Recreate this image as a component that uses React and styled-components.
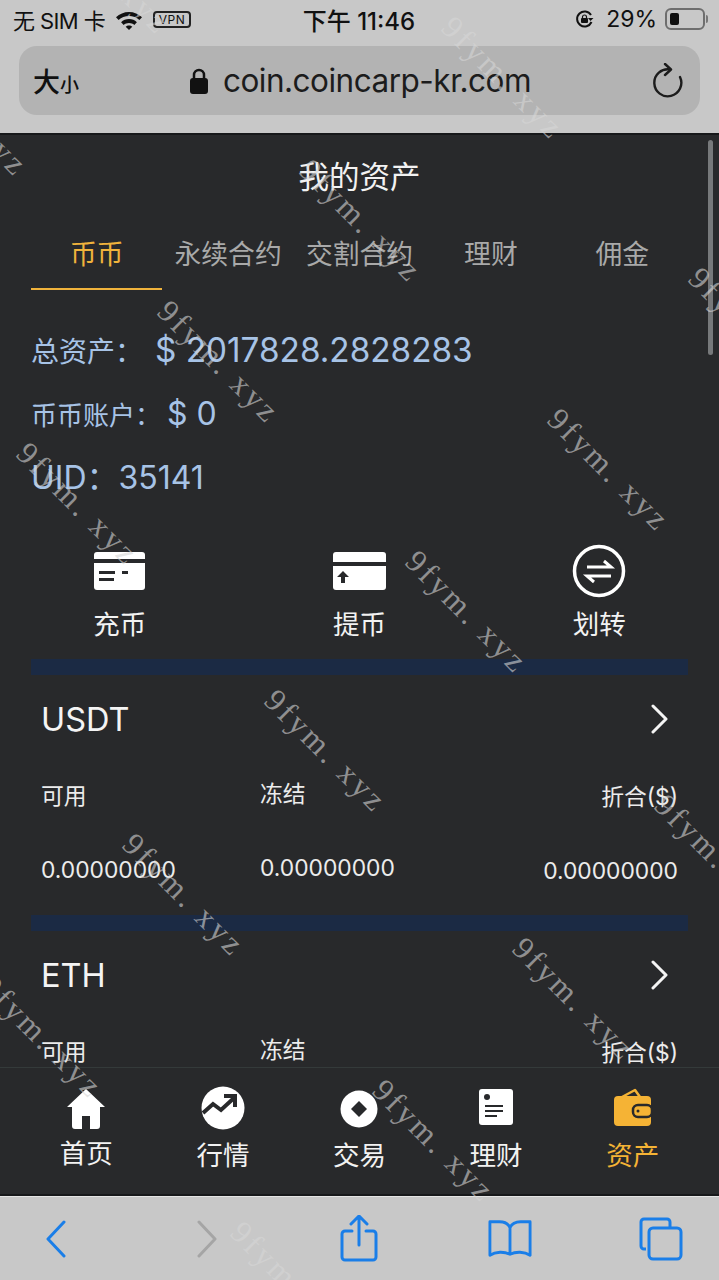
import React from "react";
import styled, { createGlobalStyle } from "styled-components";

const SANS = `Inter, "Noto Sans CJK SC", sans-serif`;
const DARK = "#28292b";

const Global = createGlobalStyle`
    html, body { margin:0; padding:0; background:${DARK}; }
    * { box-sizing:border-box; }
    body { font-family:${SANS}; }
`;

const Phone = styled.div`
    position:relative;
    width:719px;
    height:1280px;
    display:flex;
    flex-direction:column;
    overflow:hidden;
    background:${DARK};
`;

/* 상단 */
const TopChrome = styled.div`
    height:135px;
    flex:none;
    background:#c8c8c8;
    border-bottom:2px solid #17181a;
    color:#111;
`;

const StatusBar = styled.div`
    height:46px;
    padding:0 14px 8px 13px;
    display:grid;
    grid-template-columns:1fr auto 1fr;
    align-items:center;
`;

const StatusSide = styled.div`
    display:flex;
    align-items:center;
    gap:${p => p.$gap || 10}px;
    justify-content:${p => p.$end ? "flex-end" : "flex-start"};
`;

const StatusText = styled.span`
    font-size:${p => p.$size || 22}px;
    font-weight:${p => p.$weight || 400};
    letter-spacing:${p => p.$track || 0}px;
    margin-left:${p => p.$left || 0}px;
    white-space:nowrap;
`;

const VpnBadge = styled.span`
    width:38px;
    height:17px;
    border:2px solid #222;
    border-radius:4px;
    font-size:12px;
    line-height:13px;
    text-align:center;
    letter-spacing:.5px;
`;

const Battery = styled.div`
    position:relative;
    width:40px;
    height:22px;
    padding:3px;
    border:2px solid #6e6e6e;
    border-radius:6px;
    &::before {
        content:"";
        display:block;
        width:9px;
        height:100%;
        background:#111;
        border-radius:2px;
    }
    &::after {
        content:"";
        position:absolute;
        right:-5px;
        top:5px;
        width:2px;
        height:8px;
        background:#777;
        border-radius:0 2px 2px 0;
    }
`;

const UrlBar = styled.div`
    height:69px;
    margin:0 19px;
    padding:0 16px 0 14px;
    background:#b3b3b3;
    border-radius:18px;
    display:grid;
    grid-template-columns:1fr auto 1fr;
    align-items:center;
`;

const ReaderMark = styled.div`
    display:flex;
    align-items:baseline;
    font-weight:500;
    font-size:27px;
    small { font-size:19px; }
`;

const UrlText = styled.div`
    display:flex;
    align-items:center;
    gap:15px;
    padding-left:4px;
    font-size:31.5px;
    letter-spacing:-.5px;
    color:#1c1c1c;
`;

const ReloadSlot = styled.div`
    display:flex;
    justify-content:flex-end;
`;

/* 본문 */
const Viewport = styled.div`
    flex:1;
    min-height:0;
    overflow:hidden;
    padding:0 31px;
`;

const PageTitle = styled.h1`
    margin:0;
    height:84px;
    padding-top:20px;
    text-align:center;
    font-size:30.5px;
    line-height:44px;
    font-weight:400;
    color:#f2f2f2;
`;

const Tabs = styled.div`
    display:grid;
    grid-template-columns:repeat(5, 1fr);
`;

const Tab = styled.div`
    height:71px;
    line-height:70px;
    text-align:center;
    font-size:26.8px;
    white-space:nowrap;
    color:${p => p.$active ? "#f0b33c" : "#a9a9a9"};
    border-bottom:2px solid ${p => p.$active ? "#f0b33c" : "transparent"};
`;

const Balances = styled.div`
    padding-top:29px;
    color:#a7c3e6;
`;

const BalanceRow = styled.div`
    display:flex;
    align-items:center;
    height:${p => p.$h}px;
    font-size:${p => p.$size}px;
    white-space:nowrap;
`;

const BalanceLabel = styled.span`
    font-size:${p => p.$size}px;
    margin-right:${p => p.$gap || 0}px;
`;

const Actions = styled.div`
    display:grid;
    grid-template-columns:repeat(3, 1fr);
    margin:40px 0 0 -31px;
    width:719px;
`;

const Action = styled.div`
    display:flex;
    flex-direction:column;
    align-items:center;
    color:#f2f2f2;
    font-size:26.5px;
    svg { height:54px; display:block; }
`;

const ActionLabel = styled.span`
    margin-top:7px;
    line-height:38px;
`;

const Divider = styled.div`
    height:16px;
    background:#1b2a44;
    margin-top:${p => p.$top || 0}px;
`;

const CoinCard = styled.section`
    padding:0 10px;
    height:240px;
`;

const CoinHead = styled.div`
    height:88px;
    padding-right:10px;
    display:flex;
    align-items:center;
    justify-content:space-between;
    font-size:32.5px;
    color:#f4f4f4;
`;

const ColumnRow = styled.div`
    display:grid;
    grid-template-columns:219px 1fr auto;
    padding-top:19px;
    font-size:22.8px;
    color:#ececec;
`;

const CoinColumn = styled.div`
    display:flex;
    flex-direction:column;
    gap:46px;
    line-height:28px;
    margin-top:${p => p.$top}px;
    text-align:${p => p.$right ? "right" : "left"};
`;

/* 하단 탭 */
const TabBar = styled.nav`
    flex:none;
    height:129px;
    padding:0 18px;
    display:grid;
    grid-template-columns:repeat(5, 1fr);
    background:${DARK};
    border-top:1px solid #343a3a;
    border-bottom:2px solid #17181a;
`;

const TabItem = styled.div`
    display:flex;
    flex-direction:column;
    align-items:center;
    padding-top:18px;
    font-size:26.5px;
    color:${p => p.$active ? "#f5b335" : "#f2f2f2"};
    svg { height:44px; display:block; }
`;

const TabLabel = styled.span`
    margin-top:${p => p.$lift ? 3 : 5}px;
    line-height:40px;
`;

const ToolBar = styled.div`
    flex:none;
    height:84px;
    background:#c8c8c8;
    padding:0 36px 0 34px;
    display:flex;
    align-items:center;
    justify-content:space-between;
    border-top:1px solid #e4e4e4;
`;

const ToolSlot = styled.div`
    width:44px;
    display:flex;
    justify-content:center;
    color:#1a7ee8;
`;

/* 워터마크 */
const Scrollbar = styled.div`
    position:absolute;
    top:140px;
    right:6px;
    width:5px;
    height:215px;
    border-radius:3px;
    background:#77797b;
`;

const Watermark = styled.span`
    position:absolute;
    left:${p => p.$x}px;
    top:${p => p.$y}px;
    transform:translate(-50%, -50%) rotate(45deg);
    font-family:"Liberation Serif", serif;
    font-size:32px;
    letter-spacing:3.2px;
    white-space:nowrap;
    color:rgba(214,214,214,.6);
    pointer-events:none;
`;

const marks = [
    [109, -27], [503, 78], [361, 221], [219, 362], [78, 504],
    [-33, 115], [750, 329], [609, 470], [467, 612], [326, 751],
    [184, 895], [42, 1037], [716, 856], [574, 999], [434, 1141], [292, 1283],
];

const tabs = ["币币", "永续合约", "交割合约", "理财", "佣金"];

const coins = [
    { name: "USDT", values: ["0.00000000", "0.00000000", "0.00000000"] },
    { name: "ETH", values: ["0.00000000", "0.00000000", "0.00000000"] },
];

const Chevron = () => (
    <svg width="18" height="30" viewBox="0 0 18 30" fill="none" stroke="#f4f4f4" strokeWidth="3" strokeLinecap="round" strokeLinejoin="round">
        <path d="M3 2l13 13L3 28" />
    </svg>
);

const CoinBlock = ({ coin }) => (
    <CoinCard>
        <CoinHead>{coin.name}<Chevron /></CoinHead>
        <ColumnRow>
            <CoinColumn $top={0}><span>可用</span><span>{coin.values[0]}</span></CoinColumn>
            <CoinColumn $top={-2}><span>冻结</span><span>{coin.values[1]}</span></CoinColumn>
            <CoinColumn $top={1} $right><span>折合($)</span><span>{coin.values[2]}</span></CoinColumn>
        </ColumnRow>
    </CoinCard>
);

const Wifi = () => (
    <svg width="28" height="21" viewBox="0 0 28 21" fill="#111">
        <path d="M14 3c5 0 9.500 2 13 5.300l-2.600 2.800C21.600 8.500 18 7 14 7S6.400 8.500 3.600 11.100L1 8.300C4.500 5 9 3 14 3z" />
        <path d="M14 10c3 0 5.800 1.200 7.900 3.200l-2.600 2.700C17.900 14.700 16 14 14 14s-3.900.7-5.300 1.900l-2.600-2.700C8.200 11.200 11 10 14 10z" />
        <path d="M14 16.500c1.300 0 2.400.5 3.300 1.300L14 21l-3.300-3.200c.9-.8 2-1.300 3.300-1.300z" />
    </svg>
);

const Orientation = () => (
    <svg width="19" height="20" viewBox="0 0 19 20" fill="none" stroke="#111" strokeWidth="2">
        <path d="M16.500 13A7.500 7.500 0 1 1 16 6" />
        <rect x="6" y="9" width="7" height="5" rx="1" fill="#111" stroke="none" />
        <path d="M7.500 9.500V8a2 2 0 0 1 4 0v1.500" strokeWidth="1.200" />
        <path d="M18.500 9l-3 3-2.500-3z" fill="#111" stroke="none" />
    </svg>
);

const Lock = () => (
    <svg width="18" height="26" viewBox="0 0 18 26" fill="#111">
        <path d="M4 11V7a5 5 0 0 1 10 0v4" fill="none" stroke="#111" strokeWidth="2.500" />
        <rect x="0" y="10" width="18" height="16" rx="3" />
    </svg>
);

const Reload = () => (
    <svg width="32" height="36" viewBox="0 0 32 36" fill="none" stroke="#1c1c1c" strokeWidth="2.400" strokeLinecap="round" strokeLinejoin="round">
        <path d="M18 6.500A13.500 13.500 0 1 0 28 14" />
        <path d="M13 1l6 5.500-6 5.500" />
    </svg>
);

const CardIn = () => (
    <svg width="51" height="54" viewBox="0 0 51 54" fill="#fff">
        <path d="M3 8h45a3 3 0 0 1 3 3v4H0v-4a3 3 0 0 1 3-3z" />
        <path d="M0 19h51v24a3 3 0 0 1-3 3H3a3 3 0 0 1-3-3z" />
        <path d="M5 27h16v3H5zM5 34h15v3H5zM28 27h6v3h-6z" fill={DARK} />
    </svg>
);

const CardOut = () => (
    <svg width="53" height="54" viewBox="0 0 53 54" fill="#fff">
        <path d="M3 8h47a3 3 0 0 1 3 3v7H0v-7a3 3 0 0 1 3-3z" />
        <path d="M0 22h53v21a3 3 0 0 1-3 3H3a3 3 0 0 1-3-3z" />
        <path d="M10 27l6 6h-4v6h-4v-6H4z" fill={DARK} />
    </svg>
);

const Transfer = () => (
    <svg width="54" height="54" viewBox="0 0 54 54" fill="none" stroke="#fff" strokeWidth="3.500">
        <circle cx="27" cy="27" r="24.500" />
        <path d="M15 23h24l-7-6M39 32H15l7 6" strokeWidth="3" />
    </svg>
);

const HomeIcon = () => (
    <svg width="40" height="44" viewBox="0 0 40 44" fill="#fff">
        <path d="M20 3L1 21h5v19a3 3 0 0 0 3 3h7V30h8v13h7a3 3 0 0 0 3-3V21h5z" />
    </svg>
);

const TrendIcon = () => (
    <svg width="44" height="44" viewBox="0 0 44 44">
        <circle cx="22" cy="22" r="21.500" fill="#fff" />
        <path d="M2 27l10-9 8 6 13-12" fill="none" stroke={DARK} strokeWidth="4" />
        <path d="M23 10h11v11" fill="none" stroke={DARK} strokeWidth="4" />
    </svg>
);

const TradeIcon = () => (
    <svg width="40" height="44" viewBox="0 0 40 44">
        <circle cx="20" cy="23" r="18.500" fill="#fff" />
        <path d="M20 15l8 8-8 8-8-8z" fill={DARK} />
    </svg>
);

const DocIcon = () => (
    <svg width="36" height="44" viewBox="0 0 36 44">
        <rect x="1" y="3" width="34" height="36" rx="3" fill="#fff" />
        <circle cx="9" cy="11" r="3" fill={DARK} />
        <path d="M7 20h18M7 25h18M7 30h12" stroke={DARK} strokeWidth="2" />
    </svg>
);

const WalletIcon = () => (
    <svg width="40" height="44" viewBox="0 0 40 44" fill="#f5b335">
        <path d="M9 11L22 4l5 7" fill={DARK} stroke="#f5b335" strokeWidth="2.500" strokeLinejoin="round" />
        <rect x="1" y="10" width="37" height="30" rx="4" />
        <rect x="20" y="19" width="19" height="12" rx="5" stroke={DARK} strokeWidth="2.500" />
        <circle cx="25" cy="25" r="1.500" fill={DARK} />
    </svg>
);

const Back = ({ dim }) => (
    <svg width="22" height="38" viewBox="0 0 22 38" fill="none" stroke={dim ? "#a5a5a5" : "currentColor"} strokeWidth="3" strokeLinecap="round" strokeLinejoin="round">
        {dim ? <path d="M3 2l16 17L3 36" /> : <path d="M19 2L3 19l16 17" />}
    </svg>
);

const Share = () => (
    <svg width="38" height="48" viewBox="0 0 38 48" fill="none" stroke="currentColor" strokeWidth="3" strokeLinecap="round" strokeLinejoin="round">
        <path d="M19 30V2M11 9l8-8 8 8" />
        <path d="M12 16H5a3 3 0 0 0-3 3v23a3 3 0 0 0 3 3h28a3 3 0 0 0 3-3V19a3 3 0 0 0-3-3h-7" />
    </svg>
);

const Book = () => (
    <svg width="46" height="40" viewBox="0 0 46 40" fill="none" stroke="currentColor" strokeWidth="3" strokeLinecap="round" strokeLinejoin="round">
        <path d="M23 8v26M23 8c-2-4-6-6-11-6H2v35c6-4 15-4 21-1 6-3 15-3 21 1V2H34c-5 0-9 2-11 6z" />
    </svg>
);

const Pages = () => (
    <svg width="44" height="44" viewBox="0 0 44 44" fill="none" stroke="currentColor" strokeWidth="3" strokeLinejoin="round">
        <path d="M7 32H5a3 3 0 0 1-3-3V5a3 3 0 0 1 3-3h23a3 3 0 0 1 3 3v6" />
        <rect x="10" y="11" width="32" height="31" rx="4" />
    </svg>
);

const actions = [
    { label: "充币", icon: <CardIn /> },
    { label: "提币", icon: <CardOut /> },
    { label: "划转", icon: <Transfer /> },
];

const navItems = [
    { label: "首页", icon: <HomeIcon />, lift: true },
    { label: "行情", icon: <TrendIcon /> },
    { label: "交易", icon: <TradeIcon /> },
    { label: "理财", icon: <DocIcon /> },
    { label: "资产", icon: <WalletIcon />, active: true },
];

const App = () => {
    return (
        <Phone>
            <Global />
            <TopChrome>
                <StatusBar>
                    <StatusSide>
                        <StatusText $track={-.6}>无 SIM 卡</StatusText>
                        <Wifi />
                        <VpnBadge>VPN</VpnBadge>
                    </StatusSide>
                    <StatusText $size={24} $weight={500}>下午 11:46</StatusText>
                    <StatusSide $end $gap={8}>
                        <Orientation />
                        <StatusText $size={23} $left={4}>29%</StatusText>
                        <Battery />
                    </StatusSide>
                </StatusBar>
                <UrlBar>
                    <ReaderMark>大<small>小</small></ReaderMark>
                    <UrlText><Lock />coin.coincarp-kr.com</UrlText>
                    <ReloadSlot><Reload /></ReloadSlot>
                </UrlBar>
            </TopChrome>

            <Viewport>
                <PageTitle>我的资产</PageTitle>
                <Tabs>
                    {tabs.map((t, i) => <Tab key={t} $active={i === 0}>{t}</Tab>)}
                </Tabs>
                <Balances>
                    <BalanceRow $h={62} $size={33.3}>
                        <BalanceLabel $size={28} $gap={12}>总资产：</BalanceLabel>$ 2017828.2828283
                    </BalanceRow>
                    <BalanceRow $h={64} $size={32}>
                        <BalanceLabel $size={26} $gap={6}>币币账户：</BalanceLabel>$ 0
                    </BalanceRow>
                    <BalanceRow $h={59} $size={32}>UID：35141</BalanceRow>
                </Balances>
                <Actions>
                    {actions.map(a => (
                        <Action key={a.label}>
                            {a.icon}
                            <ActionLabel>{a.label}</ActionLabel>
                        </Action>
                    ))}
                </Actions>
                <Divider $top={16} />
                <CoinBlock coin={coins[0]} />
                <Divider />
                <CoinBlock coin={coins[1]} />
            </Viewport>

            <TabBar>
                {navItems.map(n => (
                    <TabItem key={n.label} $active={n.active}>
                        {n.icon}
                        <TabLabel $lift={n.lift}>{n.label}</TabLabel>
                    </TabItem>
                ))}
            </TabBar>

            <ToolBar>
                <ToolSlot><Back /></ToolSlot>
                <ToolSlot><Back dim /></ToolSlot>
                <ToolSlot><Share /></ToolSlot>
                <ToolSlot><Book /></ToolSlot>
                <ToolSlot><Pages /></ToolSlot>
            </ToolBar>

            <Scrollbar />
            {marks.map(([x, y]) => <Watermark key={`${x}-${y}`} $x={x} $y={y}>9fym. xyz</Watermark>)}
        </Phone>
    );
};

export default App;
